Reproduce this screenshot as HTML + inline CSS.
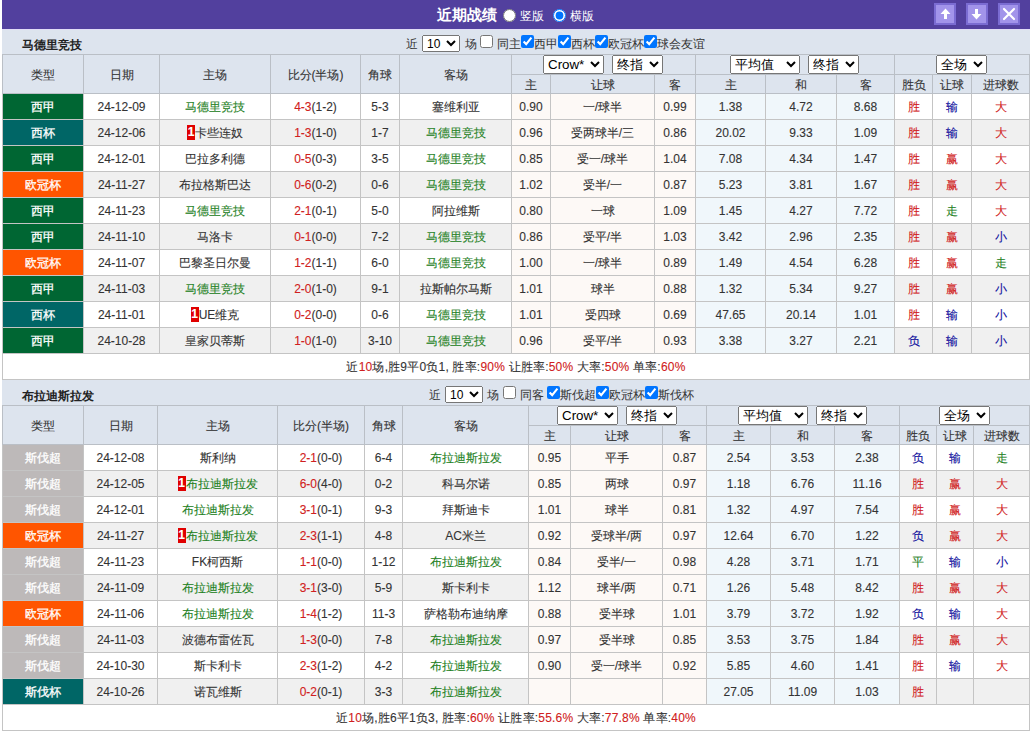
<!DOCTYPE html>
<html><head><meta charset="utf-8">
<style>
html,body{margin:0;padding:0;background:#fff;}
body{width:1031px;height:733px;position:relative;overflow:hidden;font-family:"Liberation Sans",sans-serif;font-size:12px;color:#333333;}
.a{position:absolute;}
.c{position:absolute;text-align:center;white-space:nowrap;overflow:hidden;-webkit-text-stroke:0.1px currentColor;}
.h{color:#333;}
.bd{color:#fff;-webkit-text-stroke:0.3px #fff;}
.r1{display:inline-block;background:#e00000;color:#fff;font-weight:bold;width:8px;height:15px;line-height:15px;text-align:center;vertical-align:1px;font-size:12px;}
.rd{color:#d02020;}
#hdr{position:absolute;left:2px;top:0;width:1028px;height:29px;background:#52409e;}
#lav{position:absolute;left:2px;top:29px;width:1028px;height:1px;background:#e1ddf6;}
.tb{position:absolute;left:2px;width:1028px;background:#dde4ee;}
.tt{position:absolute;font-weight:bold;color:#222;}
.btn{position:absolute;top:3px;width:18px;height:18px;border:2px solid #7b6cd2;background:#a294ea;}
.title{position:absolute;left:437px;top:4px;font-size:15px;font-weight:bold;color:#fff;line-height:22px;}
.lbl{position:absolute;color:#fff;font-size:12px;line-height:16px;}
.rad{position:absolute;width:13px;height:13px;border-radius:50%;box-sizing:border-box;}
.fl{position:absolute;font-size:12px;line-height:16px;color:#333;}
.sel{position:absolute;box-sizing:border-box;border:1px solid #767676;border-radius:2px;background:#fff;font-size:13.33px;color:#000;line-height:16px;padding-left:4px;white-space:nowrap;}
.ri{position:absolute;margin:0;width:13px;height:13px;}
.ci{position:absolute;margin:0;width:13px;height:13px;}
.fs{position:absolute;margin:0;font-family:"Liberation Sans",sans-serif;font-size:12px;}
.ss{position:absolute;margin:0;height:19px;font-family:"Liberation Sans",sans-serif;font-size:13.33px;}
.cb{position:absolute;width:13px;height:13px;box-sizing:border-box;border-radius:2px;}
.cb.off{border:1px solid #767676;background:#fff;}
.cb.on{background:#0075ff;}
</style></head><body>
<div id="hdr"></div><div id="lav"></div>
<div class="tb" style="top:30px;height:24px"></div>
<div class="tb" style="top:380px;height:25px"></div>
<div class="a" style="left:2px;top:54px;width:1028px;height:40px;background:#dde4ee;"></div>
<div class="a" style="left:2px;top:93px;width:1028px;height:26px;background:#ffffff;"></div>
<div class="a" style="left:511px;top:93px;width:184px;height:26px;background:#fdf9f6;"></div>
<div class="a" style="left:695px;top:93px;width:199px;height:26px;background:#f0f7fb;"></div>
<div class="a" style="left:2px;top:93px;width:82px;height:27px;background:#006633;"></div>
<div class="a" style="left:2px;top:119px;width:1028px;height:26px;background:#f0f0f0;"></div>
<div class="a" style="left:511px;top:119px;width:184px;height:26px;background:#fdf9f6;"></div>
<div class="a" style="left:695px;top:119px;width:199px;height:26px;background:#f0f7fb;"></div>
<div class="a" style="left:2px;top:119px;width:82px;height:27px;background:#006666;"></div>
<div class="a" style="left:2px;top:145px;width:1028px;height:26px;background:#ffffff;"></div>
<div class="a" style="left:511px;top:145px;width:184px;height:26px;background:#fdf9f6;"></div>
<div class="a" style="left:695px;top:145px;width:199px;height:26px;background:#f0f7fb;"></div>
<div class="a" style="left:2px;top:145px;width:82px;height:27px;background:#006633;"></div>
<div class="a" style="left:2px;top:171px;width:1028px;height:26px;background:#f0f0f0;"></div>
<div class="a" style="left:511px;top:171px;width:184px;height:26px;background:#fdf9f6;"></div>
<div class="a" style="left:695px;top:171px;width:199px;height:26px;background:#f0f7fb;"></div>
<div class="a" style="left:2px;top:171px;width:82px;height:27px;background:#ff5500;"></div>
<div class="a" style="left:2px;top:197px;width:1028px;height:26px;background:#ffffff;"></div>
<div class="a" style="left:511px;top:197px;width:184px;height:26px;background:#fdf9f6;"></div>
<div class="a" style="left:695px;top:197px;width:199px;height:26px;background:#f0f7fb;"></div>
<div class="a" style="left:2px;top:197px;width:82px;height:27px;background:#006633;"></div>
<div class="a" style="left:2px;top:223px;width:1028px;height:26px;background:#f0f0f0;"></div>
<div class="a" style="left:511px;top:223px;width:184px;height:26px;background:#fdf9f6;"></div>
<div class="a" style="left:695px;top:223px;width:199px;height:26px;background:#f0f7fb;"></div>
<div class="a" style="left:2px;top:223px;width:82px;height:27px;background:#006633;"></div>
<div class="a" style="left:2px;top:249px;width:1028px;height:26px;background:#ffffff;"></div>
<div class="a" style="left:511px;top:249px;width:184px;height:26px;background:#fdf9f6;"></div>
<div class="a" style="left:695px;top:249px;width:199px;height:26px;background:#f0f7fb;"></div>
<div class="a" style="left:2px;top:249px;width:82px;height:27px;background:#ff5500;"></div>
<div class="a" style="left:2px;top:275px;width:1028px;height:26px;background:#f0f0f0;"></div>
<div class="a" style="left:511px;top:275px;width:184px;height:26px;background:#fdf9f6;"></div>
<div class="a" style="left:695px;top:275px;width:199px;height:26px;background:#f0f7fb;"></div>
<div class="a" style="left:2px;top:275px;width:82px;height:27px;background:#006633;"></div>
<div class="a" style="left:2px;top:301px;width:1028px;height:26px;background:#ffffff;"></div>
<div class="a" style="left:511px;top:301px;width:184px;height:26px;background:#fdf9f6;"></div>
<div class="a" style="left:695px;top:301px;width:199px;height:26px;background:#f0f7fb;"></div>
<div class="a" style="left:2px;top:301px;width:82px;height:27px;background:#006666;"></div>
<div class="a" style="left:2px;top:327px;width:1028px;height:26px;background:#f0f0f0;"></div>
<div class="a" style="left:511px;top:327px;width:184px;height:26px;background:#fdf9f6;"></div>
<div class="a" style="left:695px;top:327px;width:199px;height:26px;background:#f0f7fb;"></div>
<div class="a" style="left:2px;top:327px;width:82px;height:27px;background:#006633;"></div>
<div class="a" style="left:2px;top:353px;width:1028px;height:27px;background:#ffffff;"></div>
<div class="a" style="left:2px;top:119px;width:1028px;height:1px;background:#c4c4c4;"></div>
<div class="a" style="left:2px;top:145px;width:1028px;height:1px;background:#c4c4c4;"></div>
<div class="a" style="left:2px;top:171px;width:1028px;height:1px;background:#c4c4c4;"></div>
<div class="a" style="left:2px;top:197px;width:1028px;height:1px;background:#c4c4c4;"></div>
<div class="a" style="left:2px;top:223px;width:1028px;height:1px;background:#c4c4c4;"></div>
<div class="a" style="left:2px;top:249px;width:1028px;height:1px;background:#c4c4c4;"></div>
<div class="a" style="left:2px;top:275px;width:1028px;height:1px;background:#c4c4c4;"></div>
<div class="a" style="left:2px;top:301px;width:1028px;height:1px;background:#c4c4c4;"></div>
<div class="a" style="left:2px;top:327px;width:1028px;height:1px;background:#c4c4c4;"></div>
<div class="a" style="left:2px;top:353px;width:1028px;height:1px;background:#c4c4c4;"></div>
<div class="a" style="left:2px;top:379px;width:1028px;height:1px;background:#c4c4c4;"></div>
<div class="a" style="left:2px;top:54px;width:1px;height:326px;background:#c4c4c4;"></div>
<div class="a" style="left:83px;top:54px;width:1px;height:300px;background:#c4c4c4;"></div>
<div class="a" style="left:159px;top:54px;width:1px;height:300px;background:#c4c4c4;"></div>
<div class="a" style="left:270px;top:54px;width:1px;height:300px;background:#c4c4c4;"></div>
<div class="a" style="left:360px;top:54px;width:1px;height:300px;background:#c4c4c4;"></div>
<div class="a" style="left:399px;top:54px;width:1px;height:300px;background:#c4c4c4;"></div>
<div class="a" style="left:511px;top:54px;width:1px;height:300px;background:#c4c4c4;"></div>
<div class="a" style="left:695px;top:54px;width:1px;height:300px;background:#c4c4c4;"></div>
<div class="a" style="left:894px;top:54px;width:1px;height:300px;background:#c4c4c4;"></div>
<div class="a" style="left:1029px;top:54px;width:1px;height:326px;background:#c4c4c4;"></div>
<div class="a" style="left:550px;top:74px;width:1px;height:280px;background:#c4c4c4;"></div>
<div class="a" style="left:654px;top:74px;width:1px;height:280px;background:#c4c4c4;"></div>
<div class="a" style="left:765px;top:74px;width:1px;height:280px;background:#c4c4c4;"></div>
<div class="a" style="left:836px;top:74px;width:1px;height:280px;background:#c4c4c4;"></div>
<div class="a" style="left:932px;top:74px;width:1px;height:280px;background:#c4c4c4;"></div>
<div class="a" style="left:971px;top:74px;width:1px;height:280px;background:#c4c4c4;"></div>
<div class="a" style="left:2px;top:54px;width:1px;height:40px;background:#babfc6;"></div>
<div class="a" style="left:83px;top:54px;width:1px;height:40px;background:#babfc6;"></div>
<div class="a" style="left:159px;top:54px;width:1px;height:40px;background:#babfc6;"></div>
<div class="a" style="left:270px;top:54px;width:1px;height:40px;background:#babfc6;"></div>
<div class="a" style="left:360px;top:54px;width:1px;height:40px;background:#babfc6;"></div>
<div class="a" style="left:399px;top:54px;width:1px;height:40px;background:#babfc6;"></div>
<div class="a" style="left:511px;top:54px;width:1px;height:40px;background:#babfc6;"></div>
<div class="a" style="left:695px;top:54px;width:1px;height:40px;background:#babfc6;"></div>
<div class="a" style="left:894px;top:54px;width:1px;height:40px;background:#babfc6;"></div>
<div class="a" style="left:1029px;top:54px;width:1px;height:40px;background:#babfc6;"></div>
<div class="a" style="left:550px;top:74px;width:1px;height:20px;background:#babfc6;"></div>
<div class="a" style="left:654px;top:74px;width:1px;height:20px;background:#babfc6;"></div>
<div class="a" style="left:765px;top:74px;width:1px;height:20px;background:#babfc6;"></div>
<div class="a" style="left:836px;top:74px;width:1px;height:20px;background:#babfc6;"></div>
<div class="a" style="left:932px;top:74px;width:1px;height:20px;background:#babfc6;"></div>
<div class="a" style="left:971px;top:74px;width:1px;height:20px;background:#babfc6;"></div>
<div class="a" style="left:2px;top:54px;width:1028px;height:1px;background:#babfc6;"></div>
<div class="a" style="left:2px;top:93px;width:1028px;height:1px;background:#babfc6;"></div>
<div class="a" style="left:511px;top:74px;width:518px;height:1px;background:#babfc6;"></div>
<div class="c h" style="left:3px;top:56px;width:80px;height:38px;line-height:38px;">类型</div>
<div class="c h" style="left:84px;top:56px;width:75px;height:38px;line-height:38px;">日期</div>
<div class="c h" style="left:160px;top:56px;width:110px;height:38px;line-height:38px;">主场</div>
<div class="c h" style="left:271px;top:56px;width:89px;height:38px;line-height:38px;">比分(半场)</div>
<div class="c h" style="left:361px;top:56px;width:38px;height:38px;line-height:38px;">角球</div>
<div class="c h" style="left:400px;top:56px;width:111px;height:38px;line-height:38px;">客场</div>
<div class="c h" style="left:512px;top:76px;width:38px;height:18px;line-height:18px;">主</div>
<div class="c h" style="left:551px;top:76px;width:103px;height:18px;line-height:18px;">让球</div>
<div class="c h" style="left:655px;top:76px;width:40px;height:18px;line-height:18px;">客</div>
<div class="c h" style="left:696px;top:76px;width:69px;height:18px;line-height:18px;">主</div>
<div class="c h" style="left:766px;top:76px;width:70px;height:18px;line-height:18px;">和</div>
<div class="c h" style="left:837px;top:76px;width:57px;height:18px;line-height:18px;">客</div>
<div class="c h" style="left:895px;top:76px;width:37px;height:18px;line-height:18px;">胜负</div>
<div class="c h" style="left:933px;top:76px;width:38px;height:18px;line-height:18px;">让球</div>
<div class="c h" style="left:972px;top:76px;width:57px;height:18px;line-height:18px;">进球数</div>
<div class="c bd" style="left:3px;top:95px;width:80px;height:25px;line-height:25px;">西甲</div>
<div class="c" style="left:84px;top:95px;width:75px;height:25px;line-height:25px;">24-12-09</div>
<div class="c" style="left:160px;top:95px;width:110px;height:25px;line-height:25px;"><span style="color:#1f821f">马德里竞技</span></div>
<div class="c" style="left:271px;top:95px;width:89px;height:25px;line-height:25px;"><span style="color:#d02020">4-3</span>(1-2)</div>
<div class="c" style="left:361px;top:95px;width:38px;height:25px;line-height:25px;">5-3</div>
<div class="c" style="left:400px;top:95px;width:111px;height:25px;line-height:25px;"><span>塞维利亚</span></div>
<div class="c" style="left:512px;top:95px;width:38px;height:25px;line-height:25px;">0.90</div>
<div class="c" style="left:551px;top:95px;width:103px;height:25px;line-height:25px;">一/球半</div>
<div class="c" style="left:655px;top:95px;width:40px;height:25px;line-height:25px;">0.99</div>
<div class="c" style="left:696px;top:95px;width:69px;height:25px;line-height:25px;">1.38</div>
<div class="c" style="left:766px;top:95px;width:70px;height:25px;line-height:25px;">4.72</div>
<div class="c" style="left:837px;top:95px;width:57px;height:25px;line-height:25px;">8.68</div>
<div class="c" style="left:895px;top:95px;width:37px;height:25px;line-height:25px;"><span style="color:#d02020">胜</span></div>
<div class="c" style="left:933px;top:95px;width:38px;height:25px;line-height:25px;"><span style="color:#0c0c9c">输</span></div>
<div class="c" style="left:972px;top:95px;width:57px;height:25px;line-height:25px;"><span style="color:#d02020">大</span></div>
<div class="c bd" style="left:3px;top:121px;width:80px;height:25px;line-height:25px;">西杯</div>
<div class="c" style="left:84px;top:121px;width:75px;height:25px;line-height:25px;">24-12-06</div>
<div class="c" style="left:160px;top:121px;width:110px;height:25px;line-height:25px;"><span class="r1">1</span><span>卡些连奴</span></div>
<div class="c" style="left:271px;top:121px;width:89px;height:25px;line-height:25px;"><span style="color:#d02020">1-3</span>(1-0)</div>
<div class="c" style="left:361px;top:121px;width:38px;height:25px;line-height:25px;">1-7</div>
<div class="c" style="left:400px;top:121px;width:111px;height:25px;line-height:25px;"><span style="color:#1f821f">马德里竞技</span></div>
<div class="c" style="left:512px;top:121px;width:38px;height:25px;line-height:25px;">0.96</div>
<div class="c" style="left:551px;top:121px;width:103px;height:25px;line-height:25px;">受两球半/三</div>
<div class="c" style="left:655px;top:121px;width:40px;height:25px;line-height:25px;">0.86</div>
<div class="c" style="left:696px;top:121px;width:69px;height:25px;line-height:25px;">20.02</div>
<div class="c" style="left:766px;top:121px;width:70px;height:25px;line-height:25px;">9.33</div>
<div class="c" style="left:837px;top:121px;width:57px;height:25px;line-height:25px;">1.09</div>
<div class="c" style="left:895px;top:121px;width:37px;height:25px;line-height:25px;"><span style="color:#d02020">胜</span></div>
<div class="c" style="left:933px;top:121px;width:38px;height:25px;line-height:25px;"><span style="color:#0c0c9c">输</span></div>
<div class="c" style="left:972px;top:121px;width:57px;height:25px;line-height:25px;"><span style="color:#d02020">大</span></div>
<div class="c bd" style="left:3px;top:147px;width:80px;height:25px;line-height:25px;">西甲</div>
<div class="c" style="left:84px;top:147px;width:75px;height:25px;line-height:25px;">24-12-01</div>
<div class="c" style="left:160px;top:147px;width:110px;height:25px;line-height:25px;"><span>巴拉多利德</span></div>
<div class="c" style="left:271px;top:147px;width:89px;height:25px;line-height:25px;"><span style="color:#d02020">0-5</span>(0-3)</div>
<div class="c" style="left:361px;top:147px;width:38px;height:25px;line-height:25px;">3-5</div>
<div class="c" style="left:400px;top:147px;width:111px;height:25px;line-height:25px;"><span style="color:#1f821f">马德里竞技</span></div>
<div class="c" style="left:512px;top:147px;width:38px;height:25px;line-height:25px;">0.85</div>
<div class="c" style="left:551px;top:147px;width:103px;height:25px;line-height:25px;">受一/球半</div>
<div class="c" style="left:655px;top:147px;width:40px;height:25px;line-height:25px;">1.04</div>
<div class="c" style="left:696px;top:147px;width:69px;height:25px;line-height:25px;">7.08</div>
<div class="c" style="left:766px;top:147px;width:70px;height:25px;line-height:25px;">4.34</div>
<div class="c" style="left:837px;top:147px;width:57px;height:25px;line-height:25px;">1.47</div>
<div class="c" style="left:895px;top:147px;width:37px;height:25px;line-height:25px;"><span style="color:#d02020">胜</span></div>
<div class="c" style="left:933px;top:147px;width:38px;height:25px;line-height:25px;"><span style="color:#d02020">赢</span></div>
<div class="c" style="left:972px;top:147px;width:57px;height:25px;line-height:25px;"><span style="color:#d02020">大</span></div>
<div class="c bd" style="left:3px;top:173px;width:80px;height:25px;line-height:25px;">欧冠杯</div>
<div class="c" style="left:84px;top:173px;width:75px;height:25px;line-height:25px;">24-11-27</div>
<div class="c" style="left:160px;top:173px;width:110px;height:25px;line-height:25px;"><span>布拉格斯巴达</span></div>
<div class="c" style="left:271px;top:173px;width:89px;height:25px;line-height:25px;"><span style="color:#d02020">0-6</span>(0-2)</div>
<div class="c" style="left:361px;top:173px;width:38px;height:25px;line-height:25px;">0-6</div>
<div class="c" style="left:400px;top:173px;width:111px;height:25px;line-height:25px;"><span style="color:#1f821f">马德里竞技</span></div>
<div class="c" style="left:512px;top:173px;width:38px;height:25px;line-height:25px;">1.02</div>
<div class="c" style="left:551px;top:173px;width:103px;height:25px;line-height:25px;">受半/一</div>
<div class="c" style="left:655px;top:173px;width:40px;height:25px;line-height:25px;">0.87</div>
<div class="c" style="left:696px;top:173px;width:69px;height:25px;line-height:25px;">5.23</div>
<div class="c" style="left:766px;top:173px;width:70px;height:25px;line-height:25px;">3.81</div>
<div class="c" style="left:837px;top:173px;width:57px;height:25px;line-height:25px;">1.67</div>
<div class="c" style="left:895px;top:173px;width:37px;height:25px;line-height:25px;"><span style="color:#d02020">胜</span></div>
<div class="c" style="left:933px;top:173px;width:38px;height:25px;line-height:25px;"><span style="color:#d02020">赢</span></div>
<div class="c" style="left:972px;top:173px;width:57px;height:25px;line-height:25px;"><span style="color:#d02020">大</span></div>
<div class="c bd" style="left:3px;top:199px;width:80px;height:25px;line-height:25px;">西甲</div>
<div class="c" style="left:84px;top:199px;width:75px;height:25px;line-height:25px;">24-11-23</div>
<div class="c" style="left:160px;top:199px;width:110px;height:25px;line-height:25px;"><span style="color:#1f821f">马德里竞技</span></div>
<div class="c" style="left:271px;top:199px;width:89px;height:25px;line-height:25px;"><span style="color:#d02020">2-1</span>(0-1)</div>
<div class="c" style="left:361px;top:199px;width:38px;height:25px;line-height:25px;">5-0</div>
<div class="c" style="left:400px;top:199px;width:111px;height:25px;line-height:25px;"><span>阿拉维斯</span></div>
<div class="c" style="left:512px;top:199px;width:38px;height:25px;line-height:25px;">0.80</div>
<div class="c" style="left:551px;top:199px;width:103px;height:25px;line-height:25px;">一球</div>
<div class="c" style="left:655px;top:199px;width:40px;height:25px;line-height:25px;">1.09</div>
<div class="c" style="left:696px;top:199px;width:69px;height:25px;line-height:25px;">1.45</div>
<div class="c" style="left:766px;top:199px;width:70px;height:25px;line-height:25px;">4.27</div>
<div class="c" style="left:837px;top:199px;width:57px;height:25px;line-height:25px;">7.72</div>
<div class="c" style="left:895px;top:199px;width:37px;height:25px;line-height:25px;"><span style="color:#d02020">胜</span></div>
<div class="c" style="left:933px;top:199px;width:38px;height:25px;line-height:25px;"><span style="color:#1f821f">走</span></div>
<div class="c" style="left:972px;top:199px;width:57px;height:25px;line-height:25px;"><span style="color:#d02020">大</span></div>
<div class="c bd" style="left:3px;top:225px;width:80px;height:25px;line-height:25px;">西甲</div>
<div class="c" style="left:84px;top:225px;width:75px;height:25px;line-height:25px;">24-11-10</div>
<div class="c" style="left:160px;top:225px;width:110px;height:25px;line-height:25px;"><span>马洛卡</span></div>
<div class="c" style="left:271px;top:225px;width:89px;height:25px;line-height:25px;"><span style="color:#d02020">0-1</span>(0-0)</div>
<div class="c" style="left:361px;top:225px;width:38px;height:25px;line-height:25px;">7-2</div>
<div class="c" style="left:400px;top:225px;width:111px;height:25px;line-height:25px;"><span style="color:#1f821f">马德里竞技</span></div>
<div class="c" style="left:512px;top:225px;width:38px;height:25px;line-height:25px;">0.86</div>
<div class="c" style="left:551px;top:225px;width:103px;height:25px;line-height:25px;">受平/半</div>
<div class="c" style="left:655px;top:225px;width:40px;height:25px;line-height:25px;">1.03</div>
<div class="c" style="left:696px;top:225px;width:69px;height:25px;line-height:25px;">3.42</div>
<div class="c" style="left:766px;top:225px;width:70px;height:25px;line-height:25px;">2.96</div>
<div class="c" style="left:837px;top:225px;width:57px;height:25px;line-height:25px;">2.35</div>
<div class="c" style="left:895px;top:225px;width:37px;height:25px;line-height:25px;"><span style="color:#d02020">胜</span></div>
<div class="c" style="left:933px;top:225px;width:38px;height:25px;line-height:25px;"><span style="color:#d02020">赢</span></div>
<div class="c" style="left:972px;top:225px;width:57px;height:25px;line-height:25px;"><span style="color:#0c0c9c">小</span></div>
<div class="c bd" style="left:3px;top:251px;width:80px;height:25px;line-height:25px;">欧冠杯</div>
<div class="c" style="left:84px;top:251px;width:75px;height:25px;line-height:25px;">24-11-07</div>
<div class="c" style="left:160px;top:251px;width:110px;height:25px;line-height:25px;"><span>巴黎圣日尔曼</span></div>
<div class="c" style="left:271px;top:251px;width:89px;height:25px;line-height:25px;"><span style="color:#d02020">1-2</span>(1-1)</div>
<div class="c" style="left:361px;top:251px;width:38px;height:25px;line-height:25px;">6-0</div>
<div class="c" style="left:400px;top:251px;width:111px;height:25px;line-height:25px;"><span style="color:#1f821f">马德里竞技</span></div>
<div class="c" style="left:512px;top:251px;width:38px;height:25px;line-height:25px;">1.00</div>
<div class="c" style="left:551px;top:251px;width:103px;height:25px;line-height:25px;">一/球半</div>
<div class="c" style="left:655px;top:251px;width:40px;height:25px;line-height:25px;">0.89</div>
<div class="c" style="left:696px;top:251px;width:69px;height:25px;line-height:25px;">1.49</div>
<div class="c" style="left:766px;top:251px;width:70px;height:25px;line-height:25px;">4.54</div>
<div class="c" style="left:837px;top:251px;width:57px;height:25px;line-height:25px;">6.28</div>
<div class="c" style="left:895px;top:251px;width:37px;height:25px;line-height:25px;"><span style="color:#d02020">胜</span></div>
<div class="c" style="left:933px;top:251px;width:38px;height:25px;line-height:25px;"><span style="color:#d02020">赢</span></div>
<div class="c" style="left:972px;top:251px;width:57px;height:25px;line-height:25px;"><span style="color:#1f821f">走</span></div>
<div class="c bd" style="left:3px;top:277px;width:80px;height:25px;line-height:25px;">西甲</div>
<div class="c" style="left:84px;top:277px;width:75px;height:25px;line-height:25px;">24-11-03</div>
<div class="c" style="left:160px;top:277px;width:110px;height:25px;line-height:25px;"><span style="color:#1f821f">马德里竞技</span></div>
<div class="c" style="left:271px;top:277px;width:89px;height:25px;line-height:25px;"><span style="color:#d02020">2-0</span>(1-0)</div>
<div class="c" style="left:361px;top:277px;width:38px;height:25px;line-height:25px;">9-1</div>
<div class="c" style="left:400px;top:277px;width:111px;height:25px;line-height:25px;"><span>拉斯帕尔马斯</span></div>
<div class="c" style="left:512px;top:277px;width:38px;height:25px;line-height:25px;">1.01</div>
<div class="c" style="left:551px;top:277px;width:103px;height:25px;line-height:25px;">球半</div>
<div class="c" style="left:655px;top:277px;width:40px;height:25px;line-height:25px;">0.88</div>
<div class="c" style="left:696px;top:277px;width:69px;height:25px;line-height:25px;">1.32</div>
<div class="c" style="left:766px;top:277px;width:70px;height:25px;line-height:25px;">5.34</div>
<div class="c" style="left:837px;top:277px;width:57px;height:25px;line-height:25px;">9.27</div>
<div class="c" style="left:895px;top:277px;width:37px;height:25px;line-height:25px;"><span style="color:#d02020">胜</span></div>
<div class="c" style="left:933px;top:277px;width:38px;height:25px;line-height:25px;"><span style="color:#d02020">赢</span></div>
<div class="c" style="left:972px;top:277px;width:57px;height:25px;line-height:25px;"><span style="color:#0c0c9c">小</span></div>
<div class="c bd" style="left:3px;top:303px;width:80px;height:25px;line-height:25px;">西杯</div>
<div class="c" style="left:84px;top:303px;width:75px;height:25px;line-height:25px;">24-11-01</div>
<div class="c" style="left:160px;top:303px;width:110px;height:25px;line-height:25px;"><span class="r1">1</span><span>UE维克</span></div>
<div class="c" style="left:271px;top:303px;width:89px;height:25px;line-height:25px;"><span style="color:#d02020">0-2</span>(0-0)</div>
<div class="c" style="left:361px;top:303px;width:38px;height:25px;line-height:25px;">0-6</div>
<div class="c" style="left:400px;top:303px;width:111px;height:25px;line-height:25px;"><span style="color:#1f821f">马德里竞技</span></div>
<div class="c" style="left:512px;top:303px;width:38px;height:25px;line-height:25px;">1.01</div>
<div class="c" style="left:551px;top:303px;width:103px;height:25px;line-height:25px;">受四球</div>
<div class="c" style="left:655px;top:303px;width:40px;height:25px;line-height:25px;">0.69</div>
<div class="c" style="left:696px;top:303px;width:69px;height:25px;line-height:25px;">47.65</div>
<div class="c" style="left:766px;top:303px;width:70px;height:25px;line-height:25px;">20.14</div>
<div class="c" style="left:837px;top:303px;width:57px;height:25px;line-height:25px;">1.01</div>
<div class="c" style="left:895px;top:303px;width:37px;height:25px;line-height:25px;"><span style="color:#d02020">胜</span></div>
<div class="c" style="left:933px;top:303px;width:38px;height:25px;line-height:25px;"><span style="color:#0c0c9c">输</span></div>
<div class="c" style="left:972px;top:303px;width:57px;height:25px;line-height:25px;"><span style="color:#0c0c9c">小</span></div>
<div class="c bd" style="left:3px;top:329px;width:80px;height:25px;line-height:25px;">西甲</div>
<div class="c" style="left:84px;top:329px;width:75px;height:25px;line-height:25px;">24-10-28</div>
<div class="c" style="left:160px;top:329px;width:110px;height:25px;line-height:25px;"><span>皇家贝蒂斯</span></div>
<div class="c" style="left:271px;top:329px;width:89px;height:25px;line-height:25px;"><span style="color:#d02020">1-0</span>(1-0)</div>
<div class="c" style="left:361px;top:329px;width:38px;height:25px;line-height:25px;">3-10</div>
<div class="c" style="left:400px;top:329px;width:111px;height:25px;line-height:25px;"><span style="color:#1f821f">马德里竞技</span></div>
<div class="c" style="left:512px;top:329px;width:38px;height:25px;line-height:25px;">0.96</div>
<div class="c" style="left:551px;top:329px;width:103px;height:25px;line-height:25px;">受平/半</div>
<div class="c" style="left:655px;top:329px;width:40px;height:25px;line-height:25px;">0.93</div>
<div class="c" style="left:696px;top:329px;width:69px;height:25px;line-height:25px;">3.38</div>
<div class="c" style="left:766px;top:329px;width:70px;height:25px;line-height:25px;">3.27</div>
<div class="c" style="left:837px;top:329px;width:57px;height:25px;line-height:25px;">2.21</div>
<div class="c" style="left:895px;top:329px;width:37px;height:25px;line-height:25px;"><span style="color:#0c0c9c">负</span></div>
<div class="c" style="left:933px;top:329px;width:38px;height:25px;line-height:25px;"><span style="color:#0c0c9c">输</span></div>
<div class="c" style="left:972px;top:329px;width:57px;height:25px;line-height:25px;"><span style="color:#0c0c9c">小</span></div>
<div class="c" style="left:3px;top:355px;width:1026px;height:25px;line-height:25px;letter-spacing:0.2px;">近<span class="rd">10</span>场,胜9平0负1, 胜率:<span class="rd">90%</span> 让胜率:<span class="rd">50%</span> 大率:<span class="rd">50%</span> 单率:<span class="rd">60%</span></div>
<div class="a" style="left:2px;top:405px;width:1028px;height:40px;background:#dde4ee;"></div>
<div class="a" style="left:2px;top:444px;width:1028px;height:26px;background:#ffffff;"></div>
<div class="a" style="left:528px;top:444px;width:178px;height:26px;background:#fdf9f6;"></div>
<div class="a" style="left:706px;top:444px;width:193px;height:26px;background:#f0f7fb;"></div>
<div class="a" style="left:2px;top:444px;width:82px;height:27px;background:#bdb9b9;"></div>
<div class="a" style="left:2px;top:470px;width:1028px;height:26px;background:#f0f0f0;"></div>
<div class="a" style="left:528px;top:470px;width:178px;height:26px;background:#fdf9f6;"></div>
<div class="a" style="left:706px;top:470px;width:193px;height:26px;background:#f0f7fb;"></div>
<div class="a" style="left:2px;top:470px;width:82px;height:27px;background:#bdb9b9;"></div>
<div class="a" style="left:2px;top:496px;width:1028px;height:26px;background:#ffffff;"></div>
<div class="a" style="left:528px;top:496px;width:178px;height:26px;background:#fdf9f6;"></div>
<div class="a" style="left:706px;top:496px;width:193px;height:26px;background:#f0f7fb;"></div>
<div class="a" style="left:2px;top:496px;width:82px;height:27px;background:#bdb9b9;"></div>
<div class="a" style="left:2px;top:522px;width:1028px;height:26px;background:#f0f0f0;"></div>
<div class="a" style="left:528px;top:522px;width:178px;height:26px;background:#fdf9f6;"></div>
<div class="a" style="left:706px;top:522px;width:193px;height:26px;background:#f0f7fb;"></div>
<div class="a" style="left:2px;top:522px;width:82px;height:27px;background:#ff5500;"></div>
<div class="a" style="left:2px;top:548px;width:1028px;height:26px;background:#ffffff;"></div>
<div class="a" style="left:528px;top:548px;width:178px;height:26px;background:#fdf9f6;"></div>
<div class="a" style="left:706px;top:548px;width:193px;height:26px;background:#f0f7fb;"></div>
<div class="a" style="left:2px;top:548px;width:82px;height:27px;background:#bdb9b9;"></div>
<div class="a" style="left:2px;top:574px;width:1028px;height:26px;background:#f0f0f0;"></div>
<div class="a" style="left:528px;top:574px;width:178px;height:26px;background:#fdf9f6;"></div>
<div class="a" style="left:706px;top:574px;width:193px;height:26px;background:#f0f7fb;"></div>
<div class="a" style="left:2px;top:574px;width:82px;height:27px;background:#bdb9b9;"></div>
<div class="a" style="left:2px;top:600px;width:1028px;height:26px;background:#ffffff;"></div>
<div class="a" style="left:528px;top:600px;width:178px;height:26px;background:#fdf9f6;"></div>
<div class="a" style="left:706px;top:600px;width:193px;height:26px;background:#f0f7fb;"></div>
<div class="a" style="left:2px;top:600px;width:82px;height:27px;background:#ff5500;"></div>
<div class="a" style="left:2px;top:626px;width:1028px;height:26px;background:#f0f0f0;"></div>
<div class="a" style="left:528px;top:626px;width:178px;height:26px;background:#fdf9f6;"></div>
<div class="a" style="left:706px;top:626px;width:193px;height:26px;background:#f0f7fb;"></div>
<div class="a" style="left:2px;top:626px;width:82px;height:27px;background:#bdb9b9;"></div>
<div class="a" style="left:2px;top:652px;width:1028px;height:26px;background:#ffffff;"></div>
<div class="a" style="left:528px;top:652px;width:178px;height:26px;background:#fdf9f6;"></div>
<div class="a" style="left:706px;top:652px;width:193px;height:26px;background:#f0f7fb;"></div>
<div class="a" style="left:2px;top:652px;width:82px;height:27px;background:#bdb9b9;"></div>
<div class="a" style="left:2px;top:678px;width:1028px;height:26px;background:#f0f0f0;"></div>
<div class="a" style="left:528px;top:678px;width:178px;height:26px;background:#fdf9f6;"></div>
<div class="a" style="left:706px;top:678px;width:193px;height:26px;background:#f0f7fb;"></div>
<div class="a" style="left:2px;top:678px;width:82px;height:27px;background:#006666;"></div>
<div class="a" style="left:2px;top:704px;width:1028px;height:27px;background:#ffffff;"></div>
<div class="a" style="left:2px;top:470px;width:1028px;height:1px;background:#c4c4c4;"></div>
<div class="a" style="left:2px;top:496px;width:1028px;height:1px;background:#c4c4c4;"></div>
<div class="a" style="left:2px;top:522px;width:1028px;height:1px;background:#c4c4c4;"></div>
<div class="a" style="left:2px;top:548px;width:1028px;height:1px;background:#c4c4c4;"></div>
<div class="a" style="left:2px;top:574px;width:1028px;height:1px;background:#c4c4c4;"></div>
<div class="a" style="left:2px;top:600px;width:1028px;height:1px;background:#c4c4c4;"></div>
<div class="a" style="left:2px;top:626px;width:1028px;height:1px;background:#c4c4c4;"></div>
<div class="a" style="left:2px;top:652px;width:1028px;height:1px;background:#c4c4c4;"></div>
<div class="a" style="left:2px;top:678px;width:1028px;height:1px;background:#c4c4c4;"></div>
<div class="a" style="left:2px;top:704px;width:1028px;height:1px;background:#c4c4c4;"></div>
<div class="a" style="left:2px;top:730px;width:1028px;height:1px;background:#c4c4c4;"></div>
<div class="a" style="left:2px;top:405px;width:1px;height:326px;background:#c4c4c4;"></div>
<div class="a" style="left:83px;top:405px;width:1px;height:300px;background:#c4c4c4;"></div>
<div class="a" style="left:157px;top:405px;width:1px;height:300px;background:#c4c4c4;"></div>
<div class="a" style="left:277px;top:405px;width:1px;height:300px;background:#c4c4c4;"></div>
<div class="a" style="left:364px;top:405px;width:1px;height:300px;background:#c4c4c4;"></div>
<div class="a" style="left:402px;top:405px;width:1px;height:300px;background:#c4c4c4;"></div>
<div class="a" style="left:528px;top:405px;width:1px;height:300px;background:#c4c4c4;"></div>
<div class="a" style="left:706px;top:405px;width:1px;height:300px;background:#c4c4c4;"></div>
<div class="a" style="left:899px;top:405px;width:1px;height:300px;background:#c4c4c4;"></div>
<div class="a" style="left:1029px;top:405px;width:1px;height:326px;background:#c4c4c4;"></div>
<div class="a" style="left:570px;top:425px;width:1px;height:280px;background:#c4c4c4;"></div>
<div class="a" style="left:662px;top:425px;width:1px;height:280px;background:#c4c4c4;"></div>
<div class="a" style="left:770px;top:425px;width:1px;height:280px;background:#c4c4c4;"></div>
<div class="a" style="left:834px;top:425px;width:1px;height:280px;background:#c4c4c4;"></div>
<div class="a" style="left:936px;top:425px;width:1px;height:280px;background:#c4c4c4;"></div>
<div class="a" style="left:973px;top:425px;width:1px;height:280px;background:#c4c4c4;"></div>
<div class="a" style="left:2px;top:405px;width:1px;height:40px;background:#babfc6;"></div>
<div class="a" style="left:83px;top:405px;width:1px;height:40px;background:#babfc6;"></div>
<div class="a" style="left:157px;top:405px;width:1px;height:40px;background:#babfc6;"></div>
<div class="a" style="left:277px;top:405px;width:1px;height:40px;background:#babfc6;"></div>
<div class="a" style="left:364px;top:405px;width:1px;height:40px;background:#babfc6;"></div>
<div class="a" style="left:402px;top:405px;width:1px;height:40px;background:#babfc6;"></div>
<div class="a" style="left:528px;top:405px;width:1px;height:40px;background:#babfc6;"></div>
<div class="a" style="left:706px;top:405px;width:1px;height:40px;background:#babfc6;"></div>
<div class="a" style="left:899px;top:405px;width:1px;height:40px;background:#babfc6;"></div>
<div class="a" style="left:1029px;top:405px;width:1px;height:40px;background:#babfc6;"></div>
<div class="a" style="left:570px;top:425px;width:1px;height:20px;background:#babfc6;"></div>
<div class="a" style="left:662px;top:425px;width:1px;height:20px;background:#babfc6;"></div>
<div class="a" style="left:770px;top:425px;width:1px;height:20px;background:#babfc6;"></div>
<div class="a" style="left:834px;top:425px;width:1px;height:20px;background:#babfc6;"></div>
<div class="a" style="left:936px;top:425px;width:1px;height:20px;background:#babfc6;"></div>
<div class="a" style="left:973px;top:425px;width:1px;height:20px;background:#babfc6;"></div>
<div class="a" style="left:2px;top:405px;width:1028px;height:1px;background:#babfc6;"></div>
<div class="a" style="left:2px;top:444px;width:1028px;height:1px;background:#babfc6;"></div>
<div class="a" style="left:528px;top:425px;width:501px;height:1px;background:#babfc6;"></div>
<div class="c h" style="left:3px;top:407px;width:80px;height:38px;line-height:38px;">类型</div>
<div class="c h" style="left:84px;top:407px;width:73px;height:38px;line-height:38px;">日期</div>
<div class="c h" style="left:158px;top:407px;width:119px;height:38px;line-height:38px;">主场</div>
<div class="c h" style="left:278px;top:407px;width:86px;height:38px;line-height:38px;">比分(半场)</div>
<div class="c h" style="left:365px;top:407px;width:37px;height:38px;line-height:38px;">角球</div>
<div class="c h" style="left:403px;top:407px;width:125px;height:38px;line-height:38px;">客场</div>
<div class="c h" style="left:529px;top:427px;width:41px;height:18px;line-height:18px;">主</div>
<div class="c h" style="left:571px;top:427px;width:91px;height:18px;line-height:18px;">让球</div>
<div class="c h" style="left:663px;top:427px;width:43px;height:18px;line-height:18px;">客</div>
<div class="c h" style="left:707px;top:427px;width:63px;height:18px;line-height:18px;">主</div>
<div class="c h" style="left:771px;top:427px;width:63px;height:18px;line-height:18px;">和</div>
<div class="c h" style="left:835px;top:427px;width:64px;height:18px;line-height:18px;">客</div>
<div class="c h" style="left:900px;top:427px;width:36px;height:18px;line-height:18px;">胜负</div>
<div class="c h" style="left:937px;top:427px;width:36px;height:18px;line-height:18px;">让球</div>
<div class="c h" style="left:974px;top:427px;width:55px;height:18px;line-height:18px;">进球数</div>
<div class="c bd" style="left:3px;top:446px;width:80px;height:25px;line-height:25px;">斯伐超</div>
<div class="c" style="left:84px;top:446px;width:73px;height:25px;line-height:25px;">24-12-08</div>
<div class="c" style="left:158px;top:446px;width:119px;height:25px;line-height:25px;"><span>斯利纳</span></div>
<div class="c" style="left:278px;top:446px;width:86px;height:25px;line-height:25px;"><span style="color:#d02020">2-1</span>(0-0)</div>
<div class="c" style="left:365px;top:446px;width:37px;height:25px;line-height:25px;">6-4</div>
<div class="c" style="left:403px;top:446px;width:125px;height:25px;line-height:25px;"><span style="color:#1f821f">布拉迪斯拉发</span></div>
<div class="c" style="left:529px;top:446px;width:41px;height:25px;line-height:25px;">0.95</div>
<div class="c" style="left:571px;top:446px;width:91px;height:25px;line-height:25px;">平手</div>
<div class="c" style="left:663px;top:446px;width:43px;height:25px;line-height:25px;">0.87</div>
<div class="c" style="left:707px;top:446px;width:63px;height:25px;line-height:25px;">2.54</div>
<div class="c" style="left:771px;top:446px;width:63px;height:25px;line-height:25px;">3.53</div>
<div class="c" style="left:835px;top:446px;width:64px;height:25px;line-height:25px;">2.38</div>
<div class="c" style="left:900px;top:446px;width:36px;height:25px;line-height:25px;"><span style="color:#0c0c9c">负</span></div>
<div class="c" style="left:937px;top:446px;width:36px;height:25px;line-height:25px;"><span style="color:#0c0c9c">输</span></div>
<div class="c" style="left:974px;top:446px;width:55px;height:25px;line-height:25px;"><span style="color:#1f821f">走</span></div>
<div class="c bd" style="left:3px;top:472px;width:80px;height:25px;line-height:25px;">斯伐超</div>
<div class="c" style="left:84px;top:472px;width:73px;height:25px;line-height:25px;">24-12-05</div>
<div class="c" style="left:158px;top:472px;width:119px;height:25px;line-height:25px;"><span class="r1">1</span><span style="color:#1f821f">布拉迪斯拉发</span></div>
<div class="c" style="left:278px;top:472px;width:86px;height:25px;line-height:25px;"><span style="color:#d02020">6-0</span>(4-0)</div>
<div class="c" style="left:365px;top:472px;width:37px;height:25px;line-height:25px;">0-2</div>
<div class="c" style="left:403px;top:472px;width:125px;height:25px;line-height:25px;"><span>科马尔诺</span></div>
<div class="c" style="left:529px;top:472px;width:41px;height:25px;line-height:25px;">0.85</div>
<div class="c" style="left:571px;top:472px;width:91px;height:25px;line-height:25px;">两球</div>
<div class="c" style="left:663px;top:472px;width:43px;height:25px;line-height:25px;">0.97</div>
<div class="c" style="left:707px;top:472px;width:63px;height:25px;line-height:25px;">1.18</div>
<div class="c" style="left:771px;top:472px;width:63px;height:25px;line-height:25px;">6.76</div>
<div class="c" style="left:835px;top:472px;width:64px;height:25px;line-height:25px;">11.16</div>
<div class="c" style="left:900px;top:472px;width:36px;height:25px;line-height:25px;"><span style="color:#d02020">胜</span></div>
<div class="c" style="left:937px;top:472px;width:36px;height:25px;line-height:25px;"><span style="color:#d02020">赢</span></div>
<div class="c" style="left:974px;top:472px;width:55px;height:25px;line-height:25px;"><span style="color:#d02020">大</span></div>
<div class="c bd" style="left:3px;top:498px;width:80px;height:25px;line-height:25px;">斯伐超</div>
<div class="c" style="left:84px;top:498px;width:73px;height:25px;line-height:25px;">24-12-01</div>
<div class="c" style="left:158px;top:498px;width:119px;height:25px;line-height:25px;"><span style="color:#1f821f">布拉迪斯拉发</span></div>
<div class="c" style="left:278px;top:498px;width:86px;height:25px;line-height:25px;"><span style="color:#d02020">3-1</span>(0-1)</div>
<div class="c" style="left:365px;top:498px;width:37px;height:25px;line-height:25px;">9-3</div>
<div class="c" style="left:403px;top:498px;width:125px;height:25px;line-height:25px;"><span>拜斯迪卡</span></div>
<div class="c" style="left:529px;top:498px;width:41px;height:25px;line-height:25px;">1.01</div>
<div class="c" style="left:571px;top:498px;width:91px;height:25px;line-height:25px;">球半</div>
<div class="c" style="left:663px;top:498px;width:43px;height:25px;line-height:25px;">0.81</div>
<div class="c" style="left:707px;top:498px;width:63px;height:25px;line-height:25px;">1.32</div>
<div class="c" style="left:771px;top:498px;width:63px;height:25px;line-height:25px;">4.97</div>
<div class="c" style="left:835px;top:498px;width:64px;height:25px;line-height:25px;">7.54</div>
<div class="c" style="left:900px;top:498px;width:36px;height:25px;line-height:25px;"><span style="color:#d02020">胜</span></div>
<div class="c" style="left:937px;top:498px;width:36px;height:25px;line-height:25px;"><span style="color:#d02020">赢</span></div>
<div class="c" style="left:974px;top:498px;width:55px;height:25px;line-height:25px;"><span style="color:#d02020">大</span></div>
<div class="c bd" style="left:3px;top:524px;width:80px;height:25px;line-height:25px;">欧冠杯</div>
<div class="c" style="left:84px;top:524px;width:73px;height:25px;line-height:25px;">24-11-27</div>
<div class="c" style="left:158px;top:524px;width:119px;height:25px;line-height:25px;"><span class="r1">1</span><span style="color:#1f821f">布拉迪斯拉发</span></div>
<div class="c" style="left:278px;top:524px;width:86px;height:25px;line-height:25px;"><span style="color:#d02020">2-3</span>(1-1)</div>
<div class="c" style="left:365px;top:524px;width:37px;height:25px;line-height:25px;">4-8</div>
<div class="c" style="left:403px;top:524px;width:125px;height:25px;line-height:25px;"><span>AC米兰</span></div>
<div class="c" style="left:529px;top:524px;width:41px;height:25px;line-height:25px;">0.92</div>
<div class="c" style="left:571px;top:524px;width:91px;height:25px;line-height:25px;">受球半/两</div>
<div class="c" style="left:663px;top:524px;width:43px;height:25px;line-height:25px;">0.97</div>
<div class="c" style="left:707px;top:524px;width:63px;height:25px;line-height:25px;">12.64</div>
<div class="c" style="left:771px;top:524px;width:63px;height:25px;line-height:25px;">6.70</div>
<div class="c" style="left:835px;top:524px;width:64px;height:25px;line-height:25px;">1.22</div>
<div class="c" style="left:900px;top:524px;width:36px;height:25px;line-height:25px;"><span style="color:#0c0c9c">负</span></div>
<div class="c" style="left:937px;top:524px;width:36px;height:25px;line-height:25px;"><span style="color:#d02020">赢</span></div>
<div class="c" style="left:974px;top:524px;width:55px;height:25px;line-height:25px;"><span style="color:#d02020">大</span></div>
<div class="c bd" style="left:3px;top:550px;width:80px;height:25px;line-height:25px;">斯伐超</div>
<div class="c" style="left:84px;top:550px;width:73px;height:25px;line-height:25px;">24-11-23</div>
<div class="c" style="left:158px;top:550px;width:119px;height:25px;line-height:25px;"><span>FK柯西斯</span></div>
<div class="c" style="left:278px;top:550px;width:86px;height:25px;line-height:25px;"><span style="color:#d02020">1-1</span>(0-0)</div>
<div class="c" style="left:365px;top:550px;width:37px;height:25px;line-height:25px;">1-12</div>
<div class="c" style="left:403px;top:550px;width:125px;height:25px;line-height:25px;"><span style="color:#1f821f">布拉迪斯拉发</span></div>
<div class="c" style="left:529px;top:550px;width:41px;height:25px;line-height:25px;">0.84</div>
<div class="c" style="left:571px;top:550px;width:91px;height:25px;line-height:25px;">受半/一</div>
<div class="c" style="left:663px;top:550px;width:43px;height:25px;line-height:25px;">0.98</div>
<div class="c" style="left:707px;top:550px;width:63px;height:25px;line-height:25px;">4.28</div>
<div class="c" style="left:771px;top:550px;width:63px;height:25px;line-height:25px;">3.71</div>
<div class="c" style="left:835px;top:550px;width:64px;height:25px;line-height:25px;">1.71</div>
<div class="c" style="left:900px;top:550px;width:36px;height:25px;line-height:25px;"><span style="color:#1f821f">平</span></div>
<div class="c" style="left:937px;top:550px;width:36px;height:25px;line-height:25px;"><span style="color:#0c0c9c">输</span></div>
<div class="c" style="left:974px;top:550px;width:55px;height:25px;line-height:25px;"><span style="color:#0c0c9c">小</span></div>
<div class="c bd" style="left:3px;top:576px;width:80px;height:25px;line-height:25px;">斯伐超</div>
<div class="c" style="left:84px;top:576px;width:73px;height:25px;line-height:25px;">24-11-09</div>
<div class="c" style="left:158px;top:576px;width:119px;height:25px;line-height:25px;"><span style="color:#1f821f">布拉迪斯拉发</span></div>
<div class="c" style="left:278px;top:576px;width:86px;height:25px;line-height:25px;"><span style="color:#d02020">3-1</span>(3-0)</div>
<div class="c" style="left:365px;top:576px;width:37px;height:25px;line-height:25px;">5-9</div>
<div class="c" style="left:403px;top:576px;width:125px;height:25px;line-height:25px;"><span>斯卡利卡</span></div>
<div class="c" style="left:529px;top:576px;width:41px;height:25px;line-height:25px;">1.12</div>
<div class="c" style="left:571px;top:576px;width:91px;height:25px;line-height:25px;">球半/两</div>
<div class="c" style="left:663px;top:576px;width:43px;height:25px;line-height:25px;">0.71</div>
<div class="c" style="left:707px;top:576px;width:63px;height:25px;line-height:25px;">1.26</div>
<div class="c" style="left:771px;top:576px;width:63px;height:25px;line-height:25px;">5.48</div>
<div class="c" style="left:835px;top:576px;width:64px;height:25px;line-height:25px;">8.42</div>
<div class="c" style="left:900px;top:576px;width:36px;height:25px;line-height:25px;"><span style="color:#d02020">胜</span></div>
<div class="c" style="left:937px;top:576px;width:36px;height:25px;line-height:25px;"><span style="color:#d02020">赢</span></div>
<div class="c" style="left:974px;top:576px;width:55px;height:25px;line-height:25px;"><span style="color:#d02020">大</span></div>
<div class="c bd" style="left:3px;top:602px;width:80px;height:25px;line-height:25px;">欧冠杯</div>
<div class="c" style="left:84px;top:602px;width:73px;height:25px;line-height:25px;">24-11-06</div>
<div class="c" style="left:158px;top:602px;width:119px;height:25px;line-height:25px;"><span style="color:#1f821f">布拉迪斯拉发</span></div>
<div class="c" style="left:278px;top:602px;width:86px;height:25px;line-height:25px;"><span style="color:#d02020">1-4</span>(1-2)</div>
<div class="c" style="left:365px;top:602px;width:37px;height:25px;line-height:25px;">11-3</div>
<div class="c" style="left:403px;top:602px;width:125px;height:25px;line-height:25px;"><span>萨格勒布迪纳摩</span></div>
<div class="c" style="left:529px;top:602px;width:41px;height:25px;line-height:25px;">0.88</div>
<div class="c" style="left:571px;top:602px;width:91px;height:25px;line-height:25px;">受半球</div>
<div class="c" style="left:663px;top:602px;width:43px;height:25px;line-height:25px;">1.01</div>
<div class="c" style="left:707px;top:602px;width:63px;height:25px;line-height:25px;">3.79</div>
<div class="c" style="left:771px;top:602px;width:63px;height:25px;line-height:25px;">3.72</div>
<div class="c" style="left:835px;top:602px;width:64px;height:25px;line-height:25px;">1.92</div>
<div class="c" style="left:900px;top:602px;width:36px;height:25px;line-height:25px;"><span style="color:#0c0c9c">负</span></div>
<div class="c" style="left:937px;top:602px;width:36px;height:25px;line-height:25px;"><span style="color:#0c0c9c">输</span></div>
<div class="c" style="left:974px;top:602px;width:55px;height:25px;line-height:25px;"><span style="color:#d02020">大</span></div>
<div class="c bd" style="left:3px;top:628px;width:80px;height:25px;line-height:25px;">斯伐超</div>
<div class="c" style="left:84px;top:628px;width:73px;height:25px;line-height:25px;">24-11-03</div>
<div class="c" style="left:158px;top:628px;width:119px;height:25px;line-height:25px;"><span>波德布雷佐瓦</span></div>
<div class="c" style="left:278px;top:628px;width:86px;height:25px;line-height:25px;"><span style="color:#d02020">1-3</span>(0-0)</div>
<div class="c" style="left:365px;top:628px;width:37px;height:25px;line-height:25px;">7-8</div>
<div class="c" style="left:403px;top:628px;width:125px;height:25px;line-height:25px;"><span style="color:#1f821f">布拉迪斯拉发</span></div>
<div class="c" style="left:529px;top:628px;width:41px;height:25px;line-height:25px;">0.97</div>
<div class="c" style="left:571px;top:628px;width:91px;height:25px;line-height:25px;">受半球</div>
<div class="c" style="left:663px;top:628px;width:43px;height:25px;line-height:25px;">0.85</div>
<div class="c" style="left:707px;top:628px;width:63px;height:25px;line-height:25px;">3.53</div>
<div class="c" style="left:771px;top:628px;width:63px;height:25px;line-height:25px;">3.75</div>
<div class="c" style="left:835px;top:628px;width:64px;height:25px;line-height:25px;">1.84</div>
<div class="c" style="left:900px;top:628px;width:36px;height:25px;line-height:25px;"><span style="color:#d02020">胜</span></div>
<div class="c" style="left:937px;top:628px;width:36px;height:25px;line-height:25px;"><span style="color:#d02020">赢</span></div>
<div class="c" style="left:974px;top:628px;width:55px;height:25px;line-height:25px;"><span style="color:#d02020">大</span></div>
<div class="c bd" style="left:3px;top:654px;width:80px;height:25px;line-height:25px;">斯伐超</div>
<div class="c" style="left:84px;top:654px;width:73px;height:25px;line-height:25px;">24-10-30</div>
<div class="c" style="left:158px;top:654px;width:119px;height:25px;line-height:25px;"><span>斯卡利卡</span></div>
<div class="c" style="left:278px;top:654px;width:86px;height:25px;line-height:25px;"><span style="color:#d02020">2-3</span>(1-2)</div>
<div class="c" style="left:365px;top:654px;width:37px;height:25px;line-height:25px;">4-2</div>
<div class="c" style="left:403px;top:654px;width:125px;height:25px;line-height:25px;"><span style="color:#1f821f">布拉迪斯拉发</span></div>
<div class="c" style="left:529px;top:654px;width:41px;height:25px;line-height:25px;">0.90</div>
<div class="c" style="left:571px;top:654px;width:91px;height:25px;line-height:25px;">受一/球半</div>
<div class="c" style="left:663px;top:654px;width:43px;height:25px;line-height:25px;">0.92</div>
<div class="c" style="left:707px;top:654px;width:63px;height:25px;line-height:25px;">5.85</div>
<div class="c" style="left:771px;top:654px;width:63px;height:25px;line-height:25px;">4.60</div>
<div class="c" style="left:835px;top:654px;width:64px;height:25px;line-height:25px;">1.41</div>
<div class="c" style="left:900px;top:654px;width:36px;height:25px;line-height:25px;"><span style="color:#d02020">胜</span></div>
<div class="c" style="left:937px;top:654px;width:36px;height:25px;line-height:25px;"><span style="color:#0c0c9c">输</span></div>
<div class="c" style="left:974px;top:654px;width:55px;height:25px;line-height:25px;"><span style="color:#d02020">大</span></div>
<div class="c bd" style="left:3px;top:680px;width:80px;height:25px;line-height:25px;">斯伐杯</div>
<div class="c" style="left:84px;top:680px;width:73px;height:25px;line-height:25px;">24-10-26</div>
<div class="c" style="left:158px;top:680px;width:119px;height:25px;line-height:25px;"><span>诺瓦维斯</span></div>
<div class="c" style="left:278px;top:680px;width:86px;height:25px;line-height:25px;"><span style="color:#d02020">0-2</span>(0-1)</div>
<div class="c" style="left:365px;top:680px;width:37px;height:25px;line-height:25px;">3-3</div>
<div class="c" style="left:403px;top:680px;width:125px;height:25px;line-height:25px;"><span style="color:#1f821f">布拉迪斯拉发</span></div>
<div class="c" style="left:529px;top:680px;width:41px;height:25px;line-height:25px;"></div>
<div class="c" style="left:571px;top:680px;width:91px;height:25px;line-height:25px;"></div>
<div class="c" style="left:663px;top:680px;width:43px;height:25px;line-height:25px;"></div>
<div class="c" style="left:707px;top:680px;width:63px;height:25px;line-height:25px;">27.05</div>
<div class="c" style="left:771px;top:680px;width:63px;height:25px;line-height:25px;">11.09</div>
<div class="c" style="left:835px;top:680px;width:64px;height:25px;line-height:25px;">1.03</div>
<div class="c" style="left:900px;top:680px;width:36px;height:25px;line-height:25px;"><span style="color:#d02020">胜</span></div>
<div class="c" style="left:937px;top:680px;width:36px;height:25px;line-height:25px;"></div>
<div class="c" style="left:974px;top:680px;width:55px;height:25px;line-height:25px;"></div>
<div class="c" style="left:3px;top:706px;width:1026px;height:25px;line-height:25px;letter-spacing:0.2px;">近<span class="rd">10</span>场,胜6平1负3, 胜率:<span class="rd">60%</span> 让胜率:<span class="rd">55.6%</span> 大率:<span class="rd">77.8%</span> 单率:<span class="rd">40%</span></div>
<div class="title">近期战绩</div>
<input type="radio" class="ri" style="left:503px;top:9px">
<div class="lbl" style="left:520px;top:8px">竖版</div>
<input type="radio" class="ri" checked style="left:553px;top:9px">
<div class="lbl" style="left:570px;top:8px">横版</div>
<div class="btn" style="left:934px"><svg width="18" height="18" viewBox="0 0 18 18"><path d="M9.5 3.5 L14.5 9 L11 9 L11 14 L8 14 L8 9 L4.5 9 Z" fill="#fff"/></svg></div>
<div class="btn" style="left:966px"><svg width="18" height="18" viewBox="0 0 18 18"><path d="M8.5 14.5 L13.5 9 L10 9 L10 4 L7 4 L7 9 L3.5 9 Z" fill="#fff"/></svg></div>
<div class="btn" style="left:998px"><svg width="18" height="18" viewBox="0 0 18 18"><path d="M4 4 L14 14 M14 4 L4 14" stroke="#fff" stroke-width="2.2" stroke-linecap="round"/></svg></div>

<div class="tt" style="left:22px;top:37px;line-height:16px">马德里竞技</div>
<div class="fl" style="left:406px;top:36px">近</div>
<select class="fs" style="left:422px;top:35px;width:38px;height:17px"><option>10</option></select>
<div class="fl" style="left:465px;top:36px">场</div>
<input type="checkbox" class="ci" style="left:480px;top:35px">
<div class="fl" style="left:497px;top:36px">同主</div>
<input type="checkbox" class="ci" checked style="left:521px;top:35px">
<div class="fl" style="left:534px;top:36px">西甲</div>
<input type="checkbox" class="ci" checked style="left:558px;top:35px">
<div class="fl" style="left:571px;top:36px">西杯</div>
<input type="checkbox" class="ci" checked style="left:595px;top:35px">
<div class="fl" style="left:608px;top:36px">欧冠杯</div>
<input type="checkbox" class="ci" checked style="left:644px;top:35px">
<div class="fl" style="left:657px;top:36px">球会友谊</div>

<select class="ss" style="left:543px;top:55px;width:61px"><option>Crow*</option></select>
<select class="ss" style="left:612px;top:55px;width:51px"><option>终指</option></select>
<select class="ss" style="left:730px;top:55px;width:70px"><option>平均值</option></select>
<select class="ss" style="left:808px;top:55px;width:51px"><option>终指</option></select>
<select class="ss" style="left:936px;top:55px;width:51px"><option>全场</option></select>

<div class="tt" style="left:22px;top:388px;line-height:16px">布拉迪斯拉发</div>
<div class="fl" style="left:429px;top:387px">近</div>
<select class="fs" style="left:445px;top:386px;width:38px;height:17px"><option>10</option></select>
<div class="fl" style="left:487px;top:387px">场</div>
<input type="checkbox" class="ci" style="left:503px;top:386px">
<div class="fl" style="left:520px;top:387px">同客</div>
<input type="checkbox" class="ci" checked style="left:547px;top:386px">
<div class="fl" style="left:560px;top:387px">斯伐超</div>
<input type="checkbox" class="ci" checked style="left:596px;top:386px">
<div class="fl" style="left:609px;top:387px">欧冠杯</div>
<input type="checkbox" class="ci" checked style="left:645px;top:386px">
<div class="fl" style="left:658px;top:387px">斯伐杯</div>

<select class="ss" style="left:557px;top:406px;width:61px"><option>Crow*</option></select>
<select class="ss" style="left:626px;top:406px;width:51px"><option>终指</option></select>
<select class="ss" style="left:738px;top:406px;width:70px"><option>平均值</option></select>
<select class="ss" style="left:816px;top:406px;width:51px"><option>终指</option></select>
<select class="ss" style="left:939px;top:406px;width:51px"><option>全场</option></select>

</body></html>
